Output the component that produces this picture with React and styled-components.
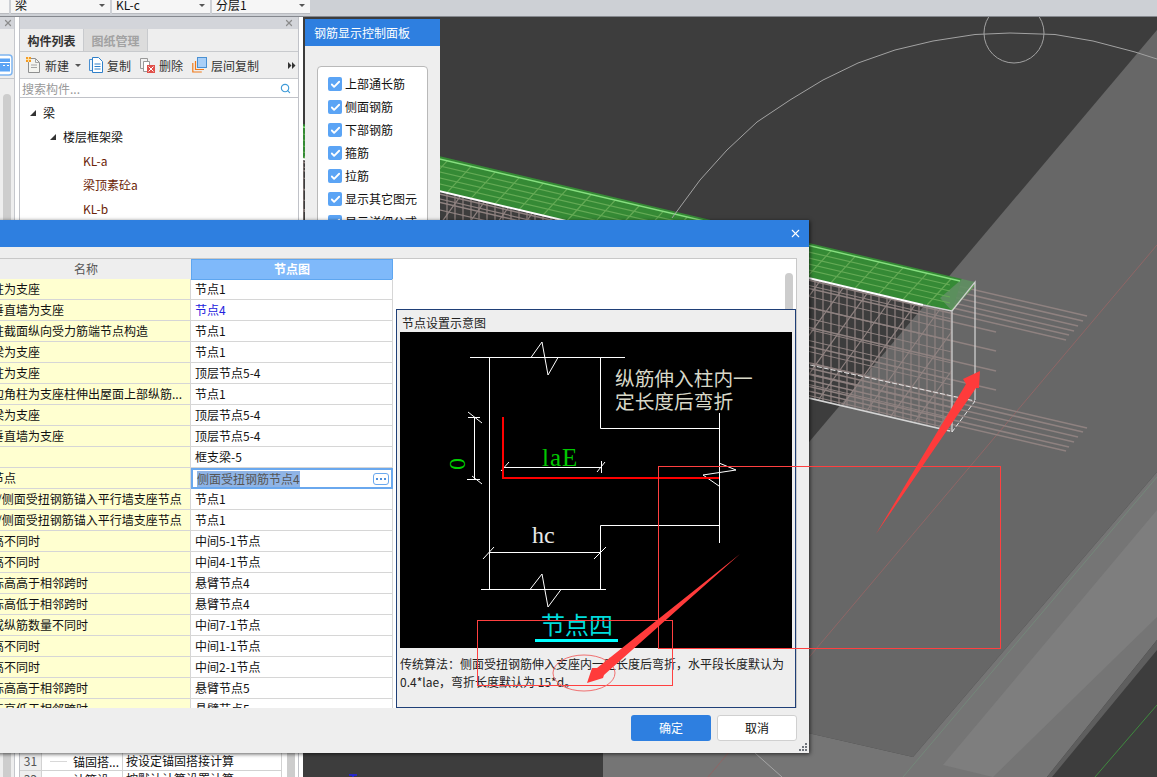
import React from 'react';
import styled, { createGlobalStyle } from 'styled-components';
import { Check, Search, X } from 'lucide-react';

const GlobalStyle = createGlobalStyle`
    html, body {
        margin: 0;
        padding: 0;
        background: #3d3d3d;
    }
    body {
        font-family: "Noto Sans CJK SC", "Noto Sans", sans-serif;
        font-size: 12px;
        color: #111;
    }
`;

const Page = styled.div`
    position: relative;
    width: 1157px;
    height: 777px;
    overflow: hidden;
    display: flex;
    flex-direction: column;
`;

/* top combo bar */
const TopBar = styled.div`
    height: 16px;
    flex: none;
    background: #cdd0d5;
    border-bottom: 1px solid #85888e;
    display: flex;
    gap: 2px;
    align-items: flex-start;
`;

const Combo = styled.div`
    width: ${props => props.$width}px;
    height: 14px;
    box-sizing: border-box;
    background: #f6f6f6;
    border-bottom: 1px solid #b9bbc0;
    display: flex;
    align-items: center;
    justify-content: space-between;
    padding: 0 5px 3px 4px;
    line-height: 12px;
    overflow: hidden;
`;

const ComboArrow = styled.span`
    width: 0;
    height: 0;
    border-left: 3px solid transparent;
    border-right: 3px solid transparent;
    border-top: 3px solid #555;
`;

const Workspace = styled.div`
    flex: 1;
    display: flex;
    min-height: 0;
    background: #fff;
`;

/* left docks */
const SideDock = styled.div`
    width: 15px;
    flex: none;
    box-sizing: border-box;
    background: #eee;
    border-right: 1px solid #c5c7cc;
    margin-right: 4px;
    display: flex;
    flex-direction: column;
`;

const DockTitle = styled.div`
    height: 12px;
    flex: none;
    background: #d3d5da;
    display: flex;
    align-items: center;
    justify-content: flex-end;
    padding-right: ${props => props.$pad || 4}px;
    color: #8c8c8c;
`;

const SideTool = styled.div`
    height: 50px;
    flex: none;
    box-sizing: border-box;
    border-bottom: 1px solid #c5c7cc;
    padding-top: 25px;
`;

const SideThumb = styled.div`
    width: 8px;
    margin: 15px 0 0 3px;
    flex: 1;
    background: #cdcdcd;
    border-radius: 4px 4px 0 0;
`;

const ListPanel = styled.div`
    width: 280px;
    flex: none;
    box-sizing: border-box;
    border-left: 1px solid #c0c2c8;
    border-right: 1px solid #c0c2c8;
    margin-right: 4px;
    display: flex;
    flex-direction: column;
    background: #fff;
`;

const Tabs = styled.div`
    height: 23px;
    flex: none;
    box-sizing: border-box;
    background: #eee;
    border-bottom: 1px solid #c8cacd;
    display: flex;
`;

const Tab = styled.div`
    width: 64px;
    box-sizing: border-box;
    text-align: center;
    line-height: 23px;
    font-weight: 700;
    color: ${props => props.$active ? '#333' : '#a2a2a2'};
    background: ${props => props.$active ? '#eee' : '#dcdcdc'};
    border-right: 1px solid #c8cacd;
`;

const Toolbar = styled.div`
    height: 27px;
    flex: none;
    box-sizing: border-box;
    background: #eee;
    border-bottom: 1px solid #c8cacd;
    display: flex;
    align-items: center;
    padding-left: 6px;
    color: #333;
`;

const ToolItem = styled.div`
    display: flex;
    align-items: center;
    gap: 4px;
    margin-right: ${props => props.$gap}px;
`;

const DropArrow = styled.span`
    margin-left: 2px;
    width: 0;
    height: 0;
    border-left: 3px solid transparent;
    border-right: 3px solid transparent;
    border-top: 3px solid #555;
`;

const MoreArrows = styled.span`
    margin-left: auto;
    margin-right: 2px;
    display: flex;
`;

const SearchRow = styled.div`
    height: 19px;
    flex: none;
    box-sizing: border-box;
    border-bottom: 1px solid #c0c2c8;
    display: flex;
    align-items: center;
    justify-content: space-between;
    padding: 0 7px 0 2px;
    color: #999;
`;

const Tree = styled.div`
    flex: 1;
    min-height: 0;
    padding-top: 3px;
`;

const TreeRow = styled.div`
    height: 24px;
    line-height: 24px;
    display: flex;
    align-items: center;
    padding-left: ${props => props.$indent}px;
    color: ${props => props.$leaf ? '#6b2408' : '#111'};
`;

const TreeArrow = styled.span`
    width: 0;
    height: 0;
    margin-right: 7px;
    border-left: 6px solid transparent;
    border-bottom: 6px solid #333;
`;

const PropArea = styled.div`
    height: 24px;
    flex: none;
    display: flex;
    overflow: hidden;
`;

const PropTable = styled.div`
    width: 262px;
    flex: none;
`;

const PropRow = styled.div`
    height: 18px;
    box-sizing: border-box;
    display: grid;
    grid-template-columns: 22px 81px 1fr;
    line-height: 16px;
    border-right: 1px solid #d2d2d2;
    border-bottom: 1px solid #d2d2d2;
`;

const PropNum = styled.div`
    background: #eee;
    color: #555;
    text-align: center;
    border-right: 1px solid #d2d2d2;
`;

const PropKey = styled.div`
    display: flex;
    align-items: center;
    gap: 6px;
    padding-left: 8px;
    border-right: 1px solid #d2d2d2;
    white-space: nowrap;
`;

const PropDash = styled.span`
    width: 17px;
    height: 1px;
    background: #d8d8d8;
`;

const PropValue = styled.div`
    padding-left: 3px;
    white-space: nowrap;
`;

const PropThumb = styled.div`
    width: 8px;
    margin-left: 5px;
    background: #cdcdcd;
`;

/* 3D view */
const Viewport = styled.div`
    flex: 1;
    position: relative;
    overflow: hidden;
    background: #3d3d3d;
`;

const SceneSvg = styled.svg`
    display: block;
    width: 854px;
    height: 760px;
`;

const ControlPanel = styled.div`
    position: absolute;
    left: 2px;
    top: 2px;
    width: 135px;
    height: 300px;
    background: #eee;
`;

const ControlTitle = styled.div`
    height: 27px;
    padding-left: 9px;
    line-height: 27px;
    background: #2e7fe0;
    color: #fff;
`;

const CheckGroup = styled.div`
    margin: 20px 0 0 12px;
    width: 111px;
    box-sizing: border-box;
    padding: 10px 0 0 10px;
    height: 240px;
    background: #fff;
    border: 1px solid #b9b9b9;
    border-radius: 4px;
`;

const CheckRow = styled.div`
    height: 23px;
    display: flex;
    align-items: flex-start;
    gap: 3px;
    line-height: 14px;
    white-space: nowrap;
`;

const CheckBox = styled.span`
    width: 14px;
    height: 14px;
    flex: none;
    border-radius: 2px;
    background: #5ba4f5;
    display: flex;
    align-items: center;
    justify-content: center;
    color: #fff;
`;

/* settings dialog */
const Dialog = styled.div`
    position: absolute;
    left: -20px;
    top: 220px;
    width: 829px;
    height: 533px;
    background: #eee;
    box-shadow: 1px 1px 4px rgba(0,0,0,.65);
    display: flex;
    flex-direction: column;
`;

const DialogHeader = styled.div`
    height: 27px;
    flex: none;
    background: #2e7fe0;
    color: #fff;
    display: flex;
    align-items: center;
    justify-content: flex-end;
    padding-right: 7px;
`;

const DialogBody = styled.div`
    flex: 1;
    min-height: 0;
    padding: 11px 12px 0 0;
`;

const TableFrame = styled.div`
    position: relative;
    height: 100%;
    box-sizing: border-box;
    border: 1px solid #c8c8c8;
    border-bottom: 0;
    background: #fff;
    display: flex;
    overflow: hidden;
`;

const NodeTable = styled.div`
    width: 412px;
    flex: none;
    overflow: hidden;
`;

const HeadRow = styled.div`
    display: grid;
    grid-template-columns: 210px 202px;
    height: 20px;
    line-height: 20px;
    text-align: center;
`;

const HeadCell = styled.div`
    box-sizing: border-box;
    color: ${props => props.$active ? '#fff' : '#555'};
    font-weight: ${props => props.$active ? 700 : 400};
    background: ${props => props.$active ? '#7fb9fa' : '#eee'};
    border: ${props => props.$active ? '1px solid #5ea6f0' : '0'};
    border-bottom: 1px solid ${props => props.$active ? '#5ea6f0' : '#c8c8c8'};
    line-height: ${props => props.$active ? '18px' : '20px'};
`;

const NodeRow = styled.div`
    display: grid;
    grid-template-columns: 210px 202px;
    height: 21px;
    line-height: 20px;
`;

const NameCell = styled.div`
    box-sizing: border-box;
    background: #ffffd0;
    border-right: 1px solid #d6d6d6;
    border-bottom: 1px solid #d6d6d6;
    padding-left: ${props => 11 - (props.$shift || 0)}px;
    white-space: nowrap;
    overflow: hidden;
`;

const ValueCell = styled.div`
    box-sizing: border-box;
    padding-left: 4px;
    border-right: 1px solid #d6d6d6;
    border-bottom: 1px solid #d6d6d6;
    color: ${props => props.$changed ? '#2222dd' : '#111'};
`;

const EditCell = styled.div`
    box-sizing: border-box;
    border: 2px solid #6aa8ee;
    background: #fff;
    display: flex;
    align-items: center;
    justify-content: space-between;
    padding: 0 2px 0 4px;
    line-height: 16px;
`;

const SelectedText = styled.span`
    background: #8fb4e6;
    color: #555;
`;

const DotsButton = styled.span`
    width: 16px;
    height: 12px;
    box-sizing: border-box;
    border: 1px solid #6aa8ee;
    border-radius: 3px;
    display: flex;
    align-items: center;
    justify-content: center;
`;

const TableGutter = styled.div`
    flex: 1;
    display: flex;
    justify-content: flex-end;
    padding: 14px 3px 0 0;
`;

const GutterThumb = styled.div`
    width: 8px;
    height: 80px;
    border-radius: 4px 4px 0 0;
    background: #cdcdcd;
`;

const PreviewBox = styled.div`
    position: absolute;
    left: 415px;
    top: 50px;
    right: 0;
    bottom: 0;
    box-sizing: border-box;
    background: #eee;
    border: 1px solid #1f3f77;
    padding: 0 3px;
`;

const PreviewTitle = styled.div`
    height: 22px;
    line-height: 25px;
    padding-left: 2px;
    color: #222;
`;

const DrawingSvg = styled.svg`
    display: block;
    width: 392px;
    height: 316px;
    background: #000;
`;

const PreviewNote = styled.div`
    margin-top: 7px;
    line-height: 18px;
    white-space: nowrap;
    color: #222;
`;

const DialogFooter = styled.div`
    position: relative;
    height: 45px;
    flex: none;
    box-sizing: border-box;
    display: flex;
    justify-content: flex-end;
    gap: 6px;
    padding: 7px 12px 0 0;
`;

const Button = styled.div`
    width: 80px;
    height: 26px;
    box-sizing: border-box;
    line-height: ${props => props.$primary ? '26px' : '24px'};
    text-align: center;
    border-radius: 3px;
    color: ${props => props.$primary ? '#fff' : '#111'};
    background: ${props => props.$primary ? '#2e7fe0' : '#fff'};
    border: ${props => props.$primary ? '0' : '1px solid #d0d0d0'};
`;

const Grip = styled.svg`
    position: absolute;
    right: 2px;
    bottom: 2px;
`;

const MarkupSvg = styled.svg`
    position: absolute;
    left: 0;
    top: 0;
    pointer-events: none;
`;

const NODE_ROWS = [
    { name: '柱为支座', value: '节点1' },
    { name: '垂直墙为支座', value: '节点4', changed: true },
    { name: '柱截面纵向受力筋端节点构造', value: '节点1' },
    { name: '梁为支座', value: '节点1' },
    { name: '柱为支座', value: '顶层节点5-4' },
    { name: '边角柱为支座柱伸出屋面上部纵筋...', value: '节点1' },
    { name: '梁为支座', value: '顶层节点5-4' },
    { name: '垂直墙为支座', value: '顶层节点5-4' },
    { name: '', value: '框支梁-5' },
    { name: '节点', edit: '侧面受扭钢筋节点4' },
    { name: '下/侧面受扭钢筋锚入平行墙支座节点', value: '节点1', shift: 7 },
    { name: '下/侧面受扭钢筋锚入平行墙支座节点', value: '节点1', shift: 7 },
    { name: '高不同时', value: '中间5-1节点' },
    { name: '高不同时', value: '中间4-1节点' },
    { name: '标高高于相邻跨时', value: '悬臂节点4' },
    { name: '标高低于相邻跨时', value: '悬臂节点4' },
    { name: '或纵筋数量不同时', value: '中间7-1节点' },
    { name: '高不同时', value: '中间1-1节点' },
    { name: '高不同时', value: '中间2-1节点' },
    { name: '标高高于相邻跨时', value: '悬臂节点5' },
    { name: '标高低于相邻跨时', value: '悬臂节点5' }
];

const CHECKS = ['上部通长筋', '侧面钢筋', '下部钢筋', '箍筋', '拉筋', '显示其它图元', '显示详细公式'];

const NOTE_LINE_1 = '传统算法\uFF1A侧面受扭钢筋伸入支座内一定长度后弯折\uFF0C水平段长度默认为';
const NOTE_LINE_2 = '0.4*lae\uFF0C弯折长度默认为 15*d\u3002';

const SLOPE = 0.233;
const BAR_ENDS = [
    [1087, 316], [1083, 321], [1078, 326], [1074, 331], [1069, 335], [1066, 340],
    [996, 332], [996, 351], [996, 371], [996, 390],
    [1087, 428], [1083, 432], [1078, 437], [1074, 442], [1069, 447], [1066, 451]
];
const frontTop = x => 159 + (x - 303) * 0.234;
const STIRRUPS = Array.from({ length: 82 }, (_, i) => 303 + i * 8);
const LACING = Array.from({ length: 28 }, (_, i) => 290 + i * 24);
const FACE_ROWS = Array.from({ length: 11 }, (_, i) => 8 + i * 11);
const TOP_ROWS = [6, 12, 18, 24];

const NewIcon = () => (
    <svg width="15" height="16" viewBox="0 0 15 16">
        <path d="M2.5 1.500h7l4 4v10h-11z" fill="#f4f4f0" stroke="#8f9090" />
        <path d="M9.500 1.500v4h4M5 8h6M5 10.500h6" fill="none" stroke="#a5a5a5" />
        <rect x="0" y="0" width="5" height="5" fill="#f59b23" />
        <path d="M0 2.500h5M2.500 0v5" stroke="#ffe0a0" />
    </svg>
);

const CopyIcon = () => (
    <svg width="14" height="16" viewBox="0 0 14 16">
        <path d="M.5 2.500h7v11h-7z" fill="#eef4fb" stroke="#4a90d2" />
        <path d="M3.500.5h6l4 4v11h-10z" fill="#fff" stroke="#2f7fc8" />
        <path d="M5.500 7h6M5.500 9.500h6M5.500 12h6" stroke="#2f7fc8" />
    </svg>
);

const DeleteIcon = () => (
    <svg width="15" height="16" viewBox="0 0 15 16">
        <path d="M.5 1.500h7v10h-7z" fill="#f2f2f2" stroke="#999" />
        <path d="M3.500 4.500h6v10h-6z" fill="#fff" stroke="#999" />
        <rect x="7" y="8" width="8" height="8" fill="#e0504a" />
        <path d="M8.500 9.500l5 5M13.500 9.500l-5 5" stroke="#fff" />
    </svg>
);

const FloorCopyIcon = () => (
    <svg width="15" height="16" viewBox="0 0 15 16">
        <path d="M.8 6v9h9M3.500 4v8.500h8.500" fill="none" stroke="#f07a1a" strokeWidth="1.2" />
        <rect x="5.500" y=".5" width="9" height="10" fill="#a9cff7" stroke="#4a90d2" />
    </svg>
);

const WindowIcon = () => (
    <svg width="13" height="22" viewBox="0 0 13 22">
        <rect x="-6" y="1" width="18" height="20" rx="3" fill="#fff" stroke="#7fb5f0" strokeWidth="1.5" />
        <rect x="-3" y="4.500" width="13" height="13" fill="#5ba4f5" />
        <path d="M-3 8.500h13M3 11.500h2M7 11.500h2" stroke="#fff" />
    </svg>
);

const Scene = () => (
    <SceneSvg viewBox="303 17 854 760">
        <defs>
            <clipPath id="frontFace">
                <polygon points="303,159 952,311 952,432 303,280" />
            </clipPath>
        </defs>
        <rect x="303" y="17" width="854" height="760" fill="#3d3d3d" />
        <polygon points="1157,30 603,686 913,757 1157,472" fill="#676767" />
        <polygon points="603,686 913,757 1157,472 1157,640 1047,777 603,777" fill="#757575" />
        <polygon points="943,765 1157,510 1157,617 993,777" fill="#7e7e7e" />
        <polygon points="1157,640 1047,777 1052,777 1157,650" fill="#5e5e5e" />
        <path d="M1157 245L708 777" stroke="#8f6666" fill="none" />
        <path d="M1157 477L903 777" stroke="#74877a" fill="none" />
        <path d="M1157 705L1095 777" stroke="#3f8a3f" fill="none" />
        <path d="M755 753L782 777" stroke="#a5a5a5" fill="none" />

        <g stroke="#8f8280" strokeWidth="1.5" fill="none">
            {BAR_ENDS.map(([x, y]) => (
                <line key={`${x}-${y}`} x1="303" y1={y - (x - 303) * SLOPE} x2={x} y2={y} />
            ))}
        </g>
        <g stroke="#8f8280" strokeWidth="1.2" fill="none" clipPath="url(#frontFace)">
            {STIRRUPS.map(x => (
                <line key={x} x1={x} y1={frontTop(x)} x2={x} y2={frontTop(x) + 121} />
            ))}
            {FACE_ROWS.map(d => (
                <line key={d} x1="303" y1={159 + d} x2="952" y2={311 + d} />
            ))}
            {LACING.map(x => (
                <line key={x} x1={x} y1={frontTop(x) + 121} x2={x + 80} y2={frontTop(x) + 10} />
            ))}
        </g>

        <polygon points="303,124 962,279 952,311 303,159" fill="#358a35" />
        <polygon points="962,279 975,282 952,311 940,298" fill="#5f8f62" fillOpacity=".9" />
        <g stroke="#64aa55" strokeWidth="1.2" fill="none">
            {TOP_ROWS.map(d => (
                <line key={d} x1="303" y1={128 + d} x2="950" y2={279 + d} />
            ))}
            {STIRRUPS.filter((_, i) => i % 3 === 0).map(x => (
                <line key={x} x1={x} y1={frontTop(x)} x2={x + 24} y2={frontTop(x) - 26} />
            ))}
        </g>
        <path d="M303 127L960 281" stroke="#86df7f" strokeWidth="1.4" fill="none" />
        <path d="M303 159L923 305" stroke="#fff" strokeWidth="2" fill="none" />
        <path d="M923 305L952 311L975 282V400M952 311V432" stroke="#cfcfcf" strokeWidth="1.3" fill="none" />
        <path d="M303 280L950 431" stroke="#d5d5d5" strokeWidth="1.5" fill="none" />
        <path d="M810 365L975 401L952 432" stroke="#e4e4e4" strokeDasharray="5 2" fill="none" />

        <circle cx="1014" cy="33" r="30" stroke="#a2a2a2" fill="none" />
        <polyline
            points="672,218 700,180 727,150 757,122 790,100 823,80 858,63 895,50 933,41 975,34.5 1010,33 1055,34.5 1093,41 1135,52 1157,59"
            stroke="#a2a2a2"
            fill="none"
        />
        <path d="M349 775h8M353 775v2" stroke="#2222ee" strokeWidth="1.5" fill="none" />
    </SceneSvg>
);

const Drawing = () => (
    <DrawingSvg viewBox="400 332 392 316">
        <g stroke="#fff" fill="none">
            <path d="M470 357.5H625M531 357.5L542 342L548 375L558 357.5" />
            <path d="M489.5 357V589M481 589.5H606M530 589.5L542 574L548 607L561 589.5" />
            <path d="M600.5 357V428.5H719.5M719.5 413V543M600.5 589V525.5H719.5" />
            <path d="M490 552.5H600M483 559L494 547M594 559L606 547" />
            <path d="M474.5 417V479M468 417.5H480M467 479.5H480M468 412L482 423M472 476L482 484" />
            <path d="M502 467.5H602M501 471L509 462M597 472L605 462M601.5 461V473" />
            <path d="M719 463L736 470L703 475L719 486" />
        </g>
        <path d="M503 417V478H719" stroke="#f00" strokeWidth="2" fill="none" />
        <text x="615" y="386" fill="#d8d8c8" fontSize="19.7">纵筋伸入柱内一</text>
        <text x="615" y="409" fill="#d8d8c8" fontSize="19.7">定长度后弯折</text>
        <text x="542" y="466" fill="#00c800" fontSize="25" letterSpacing="1" fontFamily="'Liberation Serif', serif">laE</text>
        <text x="532" y="543" fill="#e8e8e8" fontSize="24" fontFamily="'Liberation Serif', serif">hc</text>
        <text x="465" y="464" fill="#00d000" fontSize="24" textAnchor="middle" fontFamily="'Liberation Serif', serif" transform="rotate(-90 465 464)">0</text>
        <text x="541" y="634" fill="#00dcdc" fontSize="24">节点四</text>
        <rect x="535" y="639" width="83" height="3" fill="#00ffff" />
    </DrawingSvg>
);

const Markup = () => (
    <MarkupSvg width="1157" height="777" viewBox="0 0 1157 777">
        <rect x="658.5" y="466.5" width="342" height="182" fill="none" stroke="#ff4040" />
        <rect x="477.5" y="620.5" width="195" height="65" fill="none" stroke="#ff4040" />
        <ellipse cx="584" cy="673" rx="31" ry="18" fill="none" stroke="#f07070" />
        <polygon points="876,534 966,384 963,379 980,371 979,388 976,388" fill="#ff3b3b" />
        <polygon points="740,554 604,675 603,678 587,683 592,668 597,668" fill="#ff3b3b" />
    </MarkupSvg>
);

const App = () => (
    <Page>
        <GlobalStyle />
        <TopBar>
            <Combo $width={5} />
            <Combo $width={99}>梁<ComboArrow /></Combo>
            <Combo $width={98}>KL-c<ComboArrow /></Combo>
            <Combo $width={98}>分层1<ComboArrow /></Combo>
        </TopBar>

        <Workspace>
            <SideDock>
                <DockTitle $pad={1}><X size={10} strokeWidth={3} /></DockTitle>
                <SideTool><WindowIcon /></SideTool>
                <SideThumb />
            </SideDock>

            <ListPanel>
                <DockTitle><X size={10} strokeWidth={3} /></DockTitle>
                <Tabs>
                    <Tab $active>构件列表</Tab>
                    <Tab>图纸管理</Tab>
                </Tabs>
                <Toolbar>
                    <ToolItem $gap={8}>
                        <NewIcon />新建<DropArrow />
                    </ToolItem>
                    <ToolItem $gap={9}>
                        <CopyIcon />复制
                    </ToolItem>
                    <ToolItem $gap={9}>
                        <DeleteIcon />删除
                    </ToolItem>
                    <ToolItem $gap={0}>
                        <FloorCopyIcon />层间复制
                    </ToolItem>
                    <MoreArrows>
                        <svg width="8" height="7" viewBox="0 0 8 7">
                            <path d="M0 0l3.500 3.500L0 7zM4 0l3.500 3.500L4 7z" fill="#333" />
                        </svg>
                    </MoreArrows>
                </Toolbar>
                <SearchRow>
                    搜索构件...
                    <Search size={11} color="#3f9bd8" strokeWidth={2.5} />
                </SearchRow>
                <Tree>
                    <TreeRow $indent={10}><TreeArrow />梁</TreeRow>
                    <TreeRow $indent={30}><TreeArrow />楼层框架梁</TreeRow>
                    <TreeRow $indent={63} $leaf>KL-a</TreeRow>
                    <TreeRow $indent={63} $leaf>梁顶素砼a</TreeRow>
                    <TreeRow $indent={63} $leaf>KL-b</TreeRow>
                </Tree>
                <PropArea>
                    <PropTable>
                        <PropRow>
                            <PropNum>31</PropNum>
                            <PropKey><PropDash />锚固搭...</PropKey>
                            <PropValue>按设定锚固搭接计算</PropValue>
                        </PropRow>
                        <PropRow>
                            <PropNum>32</PropNum>
                            <PropKey><PropDash />计算设...</PropKey>
                            <PropValue>按默认计算设置计算</PropValue>
                        </PropRow>
                    </PropTable>
                    <PropThumb />
                </PropArea>
            </ListPanel>

            <Viewport>
                <Scene />
                <ControlPanel>
                    <ControlTitle>钢筋显示控制面板</ControlTitle>
                    <CheckGroup>
                        {CHECKS.map(label => (
                            <CheckRow key={label}>
                                <CheckBox><Check size={11} strokeWidth={4} /></CheckBox>
                                {label}
                            </CheckRow>
                        ))}
                    </CheckGroup>
                </ControlPanel>
            </Viewport>
        </Workspace>

        <Dialog>
            <DialogHeader><X size={13} strokeWidth={2} /></DialogHeader>
            <DialogBody>
                <TableFrame>
                    <NodeTable>
                        <HeadRow>
                            <HeadCell>名称</HeadCell>
                            <HeadCell $active>节点图</HeadCell>
                        </HeadRow>
                        {NODE_ROWS.map((row, i) => (
                            <NodeRow key={i}>
                                <NameCell $shift={row.shift}>{row.name}</NameCell>
                                {row.edit ? (
                                    <EditCell>
                                        <SelectedText>{row.edit}</SelectedText>
                                        <DotsButton>
                                            <svg width="10" height="2" viewBox="0 0 10 2">
                                                <path d="M0 0h2v2H0zM4 0h2v2H4zM8 0h2v2H8z" fill="#4f90dc" />
                                            </svg>
                                        </DotsButton>
                                    </EditCell>
                                ) : (
                                    <ValueCell $changed={row.changed}>{row.value}</ValueCell>
                                )}
                            </NodeRow>
                        ))}
                    </NodeTable>
                    <TableGutter><GutterThumb /></TableGutter>
                    <PreviewBox>
                        <PreviewTitle>节点设置示意图</PreviewTitle>
                        <Drawing />
                        <PreviewNote>
                            {NOTE_LINE_1}<br />
                            {NOTE_LINE_2}
                        </PreviewNote>
                    </PreviewBox>
                </TableFrame>
            </DialogBody>
            <DialogFooter>
                <Button $primary>确定</Button>
                <Button>取消</Button>
                <Grip width="8" height="8" viewBox="0 0 8 8">
                    <path d="M6 0h2v2h-2zM3 3h2v2h-2zM6 3h2v2h-2zM0 6h2v2h-2zM3 6h2v2h-2zM6 6h2v2h-2z" fill="#70757c" />
                </Grip>
            </DialogFooter>
        </Dialog>

        <Markup />
    </Page>
);

export default App;
